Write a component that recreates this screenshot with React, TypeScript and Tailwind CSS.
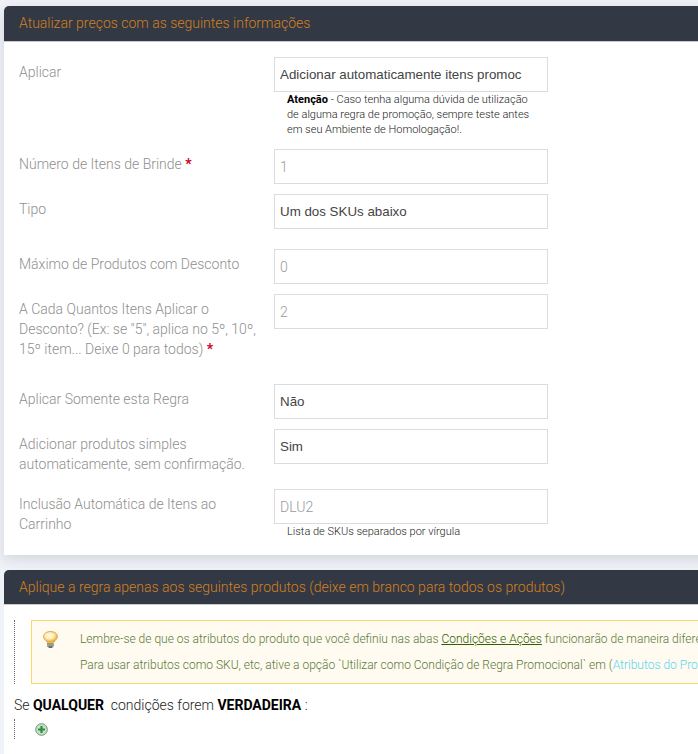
const labelCls = "font-['Roboto',sans-serif] font-light text-[14px] leading-[20px] text-[#8f8f8f]";
const boxCls = "block w-[274px] h-[35px] bg-white border border-[#dcdce0] px-[5px] font-['Roboto',sans-serif] font-light text-[14px] text-[#999] outline-none";
const selectCls = "block w-[274px] h-[35px] bg-white border border-[#dcdce0] pl-[5px] pr-[25px] appearance-none font-['Liberation_Sans',sans-serif] text-[13.33px] text-[#444] outline-none";

function Req() {
  return <span className="text-[#d0021b] font-bold text-[14px] leading-none"> *</span>;
}

function Row({ label, children, cls }: { label: React.ReactNode; children: React.ReactNode; cls: string }) {
  return (
    <div className={`flex ${cls}`}>
      <div className={`w-[270px] pl-[15px] pr-[10px] pt-[5px] ${labelCls}`}>{label}</div>
      <div>{children}</div>
    </div>
  );
}

function Txt({ value }: { value: string }) {
  return <input readOnly value={value} className={boxCls} />;
}

function Sel({ value }: { value: string }) {
  return (
    <select className={selectCls} defaultValue={value}>
      <option>{value}</option>
    </select>
  );
}

function Bulb() {
  return (
    <svg width="15" height="17" viewBox="0 0 15 17">
      <defs>
        <radialGradient id="b" cx="42%" cy="38%" r="62%">
          <stop offset="0%" stopColor="#fffbe6" />
          <stop offset="50%" stopColor="#fdeeb0" />
          <stop offset="85%" stopColor="#f3bd5c" />
          <stop offset="100%" stopColor="#e09a3c" />
        </radialGradient>
      </defs>
      <path d="M7.5 .6C3.4 .6 .6 2.7 .6 5.6c0 2.5 2.4 3.4 3.4 5.4h7c1-2 3.4-2.9 3.4-5.4C14.4 2.7 11.6 .6 7.5 .6z" fill="url(#b)" stroke="#dca25a" strokeWidth="1" />
      <rect x="4.5" y="10.6" width="6" height="2" fill="#f4c02e" />
      <rect x="4.7" y="12.6" width="5.6" height="3" fill="#9a9a9a" stroke="#6f6f6f" strokeWidth="0.5" />
      <rect x="5.6" y="15.6" width="3.8" height="1.2" fill="#444" />
    </svg>
  );
}

function Plus() {
  return (
    <svg width="13" height="13" viewBox="0 0 13 13">
      <circle cx="6.5" cy="6.5" r="5.8" fill="#c9dfc9" stroke="#6c9479" strokeWidth="1" />
      <path d="M6.5 3v7M3 6.5h7" stroke="#2e8b3d" strokeWidth="2.2" />
    </svg>
  );
}

export default function App() {
  return (
    <div className="h-[754px] w-[698px] overflow-hidden bg-[#eff2f7] pt-[6px] pl-[4px] font-['Roboto',sans-serif]">
      <section className="w-[760px] bg-white shadow-[0_4px_14px_rgba(50,56,69,0.15)] rounded-t-[5px]">
        <h2 className="h-[36px] pl-[15px] bg-[#333845] rounded-t-[5px] border-b border-[#c8c8cc] font-light text-[14px] leading-[35px] text-[#d2801c]">
          Atualizar preços com as seguintes informações
        </h2>
        <div className="pt-[15px] h-[513px]">
          <Row label="Aplicar" cls="">
            <Sel value="Adicionar automaticamente itens promocionais" />
            <p className="w-[260px] h-[47px] pl-[13px] font-light text-[11px] leading-[15px] text-[#222]">
              <strong className="font-bold text-black">Atenção</strong> - Caso tenha alguma dúvida de utilização de alguma regra de promoção, sempre teste antes em seu Ambiente de Homologação!.
            </p>
          </Row>
          <Row label={<>Número de Itens de Brinde<Req /></>} cls="mt-[10px]">
            <Txt value="1" />
          </Row>
          <Row label="Tipo" cls="mt-[10px]">
            <Sel value="Um dos SKUs abaixo" />
          </Row>
          <Row label="Máximo de Produtos com Desconto" cls="mt-[20px]">
            <Txt value="0" />
          </Row>
          <Row label={<>A Cada Quantos Itens Aplicar o Desconto? (Ex: se "5", aplica no 5º, 10º, 15º item... Deixe 0 para todos)<Req /></>} cls="mt-[10px] h-[80px]">
            <Txt value="2" />
          </Row>
          <Row label="Aplicar Somente esta Regra" cls="mt-[10px]">
            <Sel value="Não" />
          </Row>
          <Row label="Adicionar produtos simples automaticamente, sem confirmação." cls="mt-[10px] h-[50px]">
            <Sel value="Sim" />
          </Row>
          <Row label="Inclusão Automática de Itens ao Carrinho" cls="mt-[10px]">
            <Txt value="DLU2" />
            <p className="pl-[13px] font-light text-[11px] leading-[15px] text-[#222]">Lista de SKUs separados por vírgula</p>
          </Row>
        </div>
      </section>

      <section className="mt-[15px] w-[760px] h-[300px] bg-white rounded-t-[5px]">
        <h2 className="h-[35px] pl-[15px] bg-[#333845] rounded-t-[5px] border-b border-[#c8c8cc] font-light text-[14px] leading-[34px] text-[#d2801c]">
          Aplique a regra apenas aos seguintes produtos (deixe em branco para todos os produtos)
        </h2>
        <div className="pt-[15px] pl-[10px]">
          <div className="border-l border-dotted border-[#666] pl-[16px] h-[64px]">
            <div className="flex h-[64px] w-[760px] bg-[#fffbf0] border border-[#fdd76b]">
              <div className="w-[48px] pl-[11px] pt-[10px]"><Bulb /></div>
              <div className="font-light text-[12px] leading-[26px] pt-[5px] whitespace-nowrap text-[#5a7a3a]">
                <p>Lembre-se de que os atributos do produto que você definiu nas abas <a className="underline text-[#2f5f00]">Condições e Ações</a> funcionarão de maneira diferente.</p>
                <p>Para usar atributos como SKU, etc, ative a opção `Utilizar como Condição de Regra Promocional` em (<a className="text-[#55d6f0]">Atributos do Produto</a>)</p>
              </div>
            </div>
          </div>
          <p className="mt-[11px] text-[14px] leading-[20px] font-light text-[#222]">
            Se <strong className="font-bold text-black">QUALQUER</strong> &nbsp;condições forem <strong className="font-bold text-black">VERDADEIRA</strong> :
          </p>
          <div className="mt-[4px] border-l border-dotted border-[#666] pl-[20px] h-[20px] pt-[4px]">
            <Plus />
          </div>
        </div>
      </section>
    </div>
  );
}
